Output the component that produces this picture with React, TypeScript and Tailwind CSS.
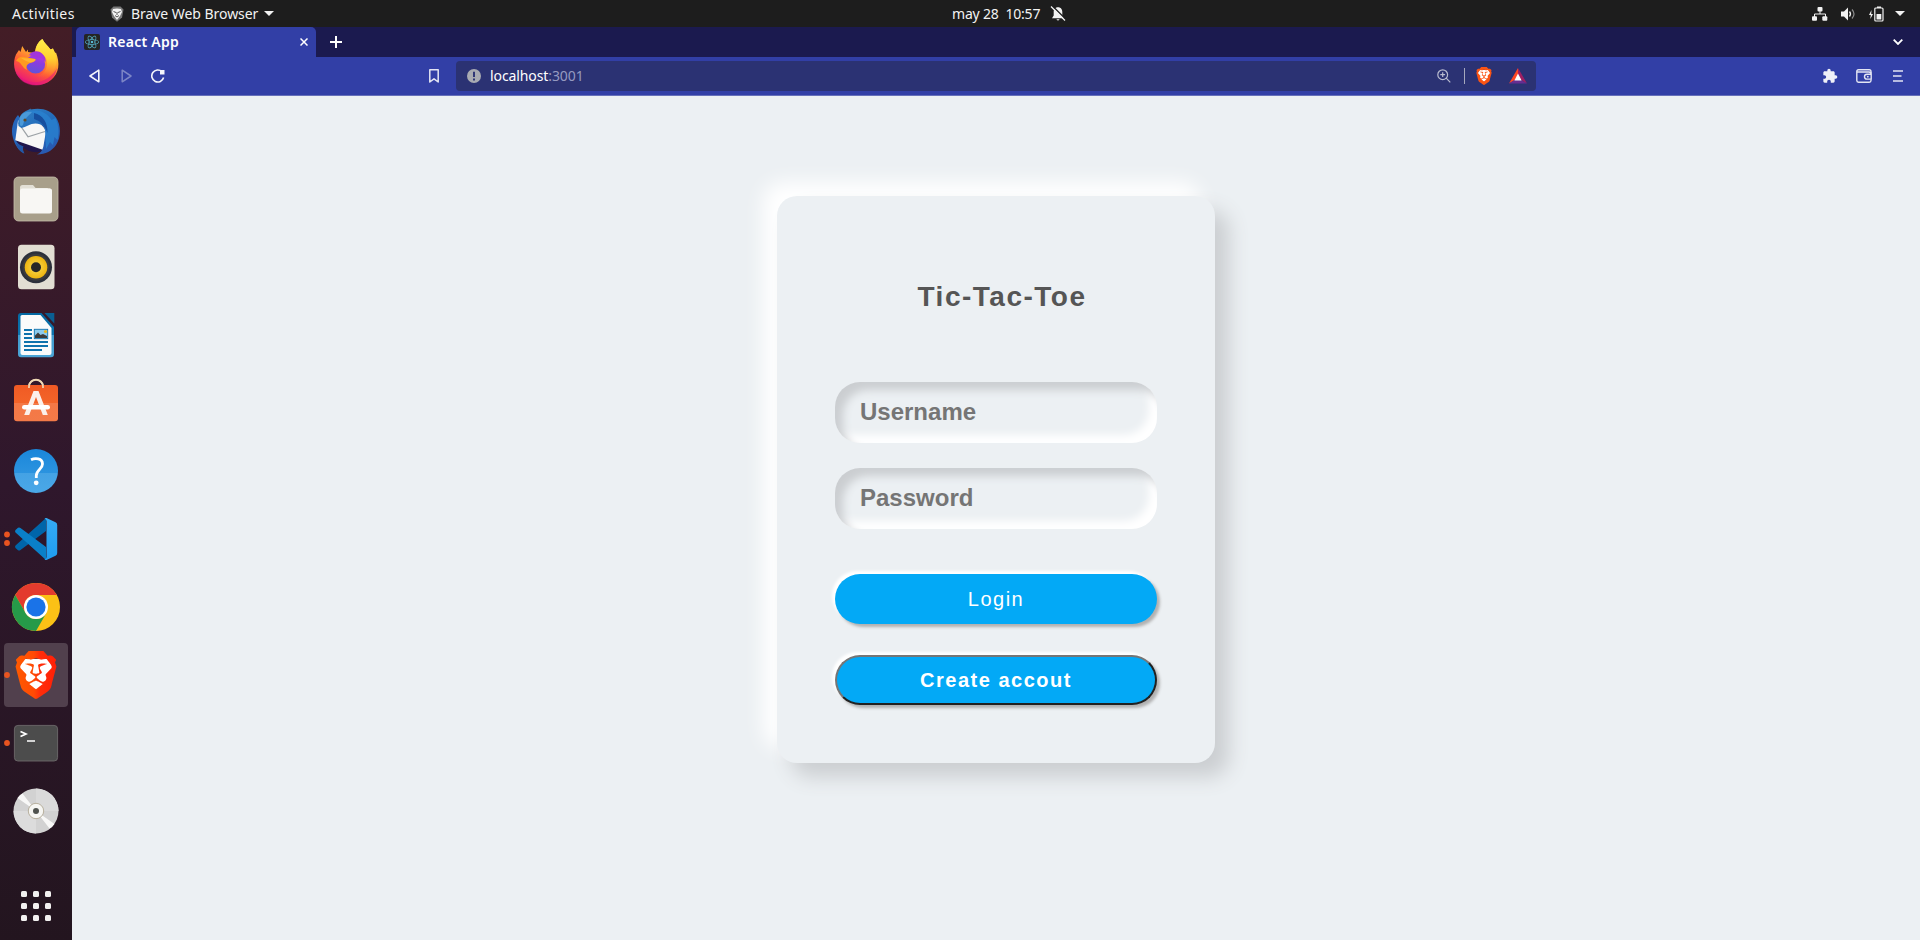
import React from "react";
import { SiBrave, SiReact } from "react-icons/si";
import { MdExtension } from "react-icons/md";

const Tile = ({ children, active = false, dots = [] as number[] }: { children?: React.ReactNode; active?: boolean; dots?: number[] }) => (
  <div className={active ? "h-16 w-16 shrink-0 rounded bg-[#51404d]" : "h-16 w-16 shrink-0"}>
    <svg viewBox="0 0 64 64" className="h-16 w-16 overflow-visible">
      {dots.map((y) => (
        <circle key={y} cx="3" cy={y} r="2.9" fill="#e95420" />
      ))}
      {children}
    </svg>
  </div>
);

const Gradients = () => (
  <defs>
    <linearGradient id="ffBody" x1="0.8" y1="0" x2="0.3" y2="1">
      <stop offset="0" stopColor="#fff44f" />
      <stop offset="0.35" stopColor="#ffb02e" />
      <stop offset="0.65" stopColor="#ff5a36" />
      <stop offset="1" stopColor="#e8117f" />
    </linearGradient>
    <linearGradient id="ffFlame" x1="0" y1="0" x2="0" y2="1">
      <stop offset="0" stopColor="#fff04a" />
      <stop offset="0.5" stopColor="#ffd130" />
      <stop offset="1" stopColor="#ff8a2a" stopOpacity="0" />
    </linearGradient>
    <linearGradient id="ffGlobe" x1="0.3" y1="1" x2="0.6" y2="0">
      <stop offset="0" stopColor="#5b55d8" />
      <stop offset="0.6" stopColor="#8a3de0" />
      <stop offset="1" stopColor="#b536e0" />
    </linearGradient>
    <linearGradient id="tbBody" x1="0.2" y1="0" x2="0.8" y2="1">
      <stop offset="0" stopColor="#2f7fc4" />
      <stop offset="0.5" stopColor="#2168b9" />
      <stop offset="1" stopColor="#2a56b0" />
    </linearGradient>
    <linearGradient id="help" x1="0" y1="0" x2="0" y2="1">
      <stop offset="0" stopColor="#1a86da" />
      <stop offset="0.54" stopColor="#2b93df" />
      <stop offset="0.55" stopColor="#44a2e4" />
      <stop offset="1" stopColor="#4aa8e8" />
    </linearGradient>
    <linearGradient id="bag" x1="0" y1="0" x2="0" y2="1">
      <stop offset="0" stopColor="#f05a24" />
      <stop offset="0.49" stopColor="#f36429" />
      <stop offset="0.5" stopColor="#f47846" />
      <stop offset="1" stopColor="#f37a48" />
    </linearGradient>
    <linearGradient id="writer" x1="0" y1="0" x2="0" y2="1">
      <stop offset="0" stopColor="#0369a3" />
      <stop offset="0.49" stopColor="#0e74ae" />
      <stop offset="0.5" stopColor="#3f9bcd" />
      <stop offset="1" stopColor="#4ba5d6" />
    </linearGradient>
    <linearGradient id="brave" x1="0" y1="0" x2="1" y2="0">
      <stop offset="0" stopColor="#ff5a00" />
      <stop offset="0.45" stopColor="#ff4a05" />
      <stop offset="0.6" stopColor="#ff2d0a" />
      <stop offset="1" stopColor="#ff1f06" />
    </linearGradient>
    <linearGradient id="code" x1="0" y1="0" x2="0" y2="1">
      <stop offset="0" stopColor="#35abf3" />
      <stop offset="1" stopColor="#1f9cf0" />
    </linearGradient>
    <radialGradient id="speaker">
      <stop offset="0" stopColor="#f9dc55" />
      <stop offset="1" stopColor="#edb40f" />
    </radialGradient>
  </defs>
);

const Dock = () => (
  <aside className="flex w-[72px] shrink-0 flex-col items-center gap-1 bg-linear-to-b from-[#431d26] via-[#2f172c] to-[#23151f] pt-1">
    <Tile>
      <Gradients />
      <path d="M38.3 8C41 13 44 15 46.500 18.500L49 17.500C49.200 20 50 20.500 51 22L52 21.500C56 32 55.500 42 47 49C39 56 25 55.500 17 48.500C9.500 42 8.500 31 12 23.500L15 19L16.500 21L18.200 15L22 21L24 18.500L24 21L31 22C31 16 34 11 38.300 8Z" fill="url(#ffBody)" />
      <path d="M38.300 8C41 13 44 15 46.500 18.500L49 17.500C54 26 54 37 46 44C41 48 36 47 33 45C42 43 45 34 42 27L38 23C34 20 31.500 20 31.500 20C32 15 34 11 38.300 8Z" fill="url(#ffFlame)" />
      <circle cx="31.600" cy="33" r="9.600" fill="url(#ffGlobe)" />
      <path d="M25 24C28 20 34 19 38 22.500C41 25 42 28 41.500 31C39 27 36 26 33 27Z" fill="#a235dc" />
      <path d="M12 30C14 26 17 25.500 20 26L31.500 28C32.500 30 29 31.500 26 32C22 34 22 36 23 39C18 37 18 31 12 30Z" fill="#ff9a1f" />
      <path d="M17 27L31 28C32 30 29 31 26 31.600C23 30.500 20 29 17 27Z" fill="#ffb52e" />
      <path d="M11.500 40C18 51 32 55 44 47C48 44 51 41 53 37C51 48 42 54.500 32 54.500C22 54.500 14 49 11.500 40Z" fill="#e0147f" opacity="0.55" />
    </Tile>
    <Tile>
      <path d="M14 16C9 22 6.500 30 9 39C11 46 14 51 20 54.500C18.500 51 19 49 19 47L30 40Z" fill="#2666bb" />
      <path d="M11.500 41L39.500 50.500L36 53C27 54 17 50 11.500 41Z" fill="#20164b" />
      <path d="M12 44C13 49 16 53 20.500 54.500C18.500 51 18.500 49 19.500 47.500Z" fill="#2357a6" />
      <path d="M14 21.500L11.300 41.300L39.300 51L43 32L34 22Z" fill="#f7f7f6" />
      <path d="M14.500 24L24 37.700L41 32.500" fill="none" stroke="#9da3a7" strokeWidth="1.200" />
      <path d="M14.500 27C13 19 18 13 24 11L27 9.500L26.500 10.500C37 8 47 11 52 18.500C57 26 57.500 38 52 46C47.500 52 42 55.500 33 55.500C36.500 54 38 52 39.300 48L41.500 35C41.500 28 38 24.500 31.500 24.500C26 24.500 22 28 17.500 29Z" fill="url(#tbBody)" />
      <path d="M26 12C34 10 43 13 47.500 21L51.500 19C54.500 26 55.500 33 53.500 41L50.500 38L49 46L46 43L42 50L41.300 35C42 27 37 18 26 12Z" fill="#2a83d2" opacity="0.75" />
      <path d="M30 14C39 16 44 24 43.500 34C41 27 37 22 30 20Z" fill="#164f9f" />
      <path d="M15.500 20C17 14 22 12 28 13C25 17 21 18 19 26Q17 28 16 26Z" fill="#4a99d8" />
      <circle cx="21" cy="21" r="1.600" fill="#5f4a29" />
    </Tile>
    <Tile>
      <rect x="10" y="10" width="44" height="44" rx="4.500" fill="#a89f8a" stroke="#c5beaa" strokeWidth="0.800" />
      <path d="M16 20.500Q16 18 18.500 18H29L32 21.500H46Q48 21.500 48 24V30H16Z" fill="#e3e0d6" />
      <rect x="16" y="21.500" width="32" height="25" rx="2.500" fill="#f8f7f4" />
      <path d="M16 25Q16 23.500 18 23.500H29L32 21.300H44L40 28H16Z" fill="#f8f7f4" />
    </Tile>
    <Tile>
      <rect x="14" y="9.800" width="36.500" height="44.400" rx="3.500" fill="#e2ded3" />
      <circle cx="32" cy="32.300" r="16" fill="#2c303b" />
      <circle cx="32" cy="32.300" r="13.500" fill="#3b3b3d" />
      <circle cx="32" cy="32.300" r="11.300" fill="url(#speaker)" />
      <circle cx="32" cy="32.300" r="5" fill="#262627" />
    </Tile>
    <Tile>
      <path d="M17 10H37.500L50 24V51Q50 54.300 47 54.300H17Q14 54.300 14 51V13Q14 10 17 10Z" fill="url(#writer)" />
      <path d="M18 12H36.500L47.500 25V50Q47.500 52 45.500 52H18.500Q16.500 52 16.500 50V13.500Q16.500 12 18 12Z" fill="#fafbfb" />
      <path d="M40.500 10H50.300V20.500Z" fill="#0a5e92" />
      <path d="M20 27H28M20 31H28M20 35H28M20 39H44M20 43H44M20 47H38" stroke="#0f73ad" strokeWidth="1.800" />
      <rect x="30.300" y="26.300" width="13.400" height="9.400" fill="#8ccbed" stroke="#0f73ad" strokeWidth="0.900" />
      <path d="M31 35V32.500L34 29.500L36.500 32L39 31L43 33V35Z" fill="#3c3c3c" />
      <circle cx="41.500" cy="28.500" r="1.600" fill="#e9b51c" />
    </Tile>
    <Tile>
      <path d="M25 17V15.500A7 7 0 0 1 39 15.500V17" fill="none" stroke="#f0d9b5" strokeWidth="1.700" />
      <rect x="10" y="14" width="44" height="36.300" rx="3" fill="url(#bag)" />
      <path d="M25 17V15A7 6 0 0 1 39 15V17" fill="none" stroke="#f0d9b5" strokeWidth="1.700" />
      <path d="M29.500 20H34.500L43.800 44H38.800L32 26L25.200 44H20.200Z" fill="#fbf0ea" />
      <rect x="18" y="34" width="28" height="4.600" rx="2.300" fill="#ffffff" />
    </Tile>
    <Tile>
      <circle cx="32" cy="32" r="22" fill="url(#help)" />
      <path d="M27 20.800C31 18.800 38.500 19 38.500 25C38.500 30 32.300 30.500 32.300 36.800V39" fill="none" stroke="#ffffff" strokeWidth="2.800" />
      <circle cx="32.200" cy="43.800" r="2.400" fill="#ffffff" />
    </Tile>
    <Tile dots={[27.500, 36]}>
      <path d="M42 11L11.500 38.500Q10.500 39.700 11.500 41L14 43.200Q15.300 44 16.500 43L42 24Z" fill="#0065a9" />
      <path d="M42 53L11.500 25.500Q10.500 24.300 11.500 23L14 20.800Q15.300 20 16.500 21L42 40Z" fill="#0a80c8" />
      <path d="M42.500 11L51.500 15.200Q53.200 16 53.200 18V46Q53.200 48 51.500 48.800L42.500 53Q41.500 53.300 40.500 52.500Q42.500 52 42.500 50V14Q42.500 12 40.500 11.500Q41.500 10.700 42.500 11Z" fill="url(#code)" />
    </Tile>
    <Tile>
      <circle cx="32" cy="32" r="24" fill="#fbc116" />
      <path d="M11.200 20A24 24 0 0 1 52.800 20H32A12 12 0 0 0 21.600 38Z" fill="#e33b2e" />
      <path d="M11.200 20A24 24 0 0 0 32 56L42.400 38A12 12 0 0 1 21.600 38Z" fill="#269a49" />
      <circle cx="32" cy="32" r="12" fill="#ffffff" />
      <circle cx="32" cy="32" r="9.600" fill="#1a73e8" />
    </Tile>
    <Tile active dots={[32]}>
      <path d="M20 16L44 16L49 24L43 44L32 52L21 44L15 24Z" fill="#ffffff" />
      <SiBrave x="8" y="8" width="48" height="48" size={48} fill="url(#brave)" />
    </Tile>
    <Tile dots={[32]}>
      <rect x="10.400" y="14.400" width="43.200" height="35.600" rx="3.500" fill="#4c4c4c" stroke="#6d6a6b" strokeWidth="0.900" />
      <path d="M16.500 20.500L22 23L16.500 25.500" fill="none" stroke="#ffffff" strokeWidth="1.700" />
      <path d="M23 30H31" stroke="#ffffff" strokeWidth="1.500" />
    </Tile>
    <Tile>
      <circle cx="32" cy="32" r="22.500" fill="#d2d2d2" />
      <path d="M32 32L32 9.500A22.500 22.500 0 0 1 54.500 32Z" fill="#dadada" />
      <path d="M32 32L32 54.500A22.500 22.500 0 0 1 9.500 32Z" fill="#dcdcdc" />
      <path d="M32 32L13.500 19Q15.500 16 18.500 14.500ZM32 32L50.500 45Q48.500 48 45.500 49.500Z" fill="#f8f8f7" />
      <circle cx="32" cy="32" r="7.700" fill="#f6f6f3" stroke="#b1a894" strokeWidth="0.900" />
      <circle cx="32" cy="32" r="3" fill="#50534f" />
    </Tile>
    <div className="mt-11 grid grid-cols-3 gap-1.5">
      {Array.from({ length: 9 }, (_, i) => (
        <span key={i} className="h-1.5 w-1.5 rounded-[1.5px] bg-[#f2f1f0]" />
      ))}
    </div>
  </aside>
);

const TopBar = () => (
  <header className="flex h-[27px] shrink-0 items-center bg-[#1d1d1d] text-[14px] text-[#f2f2f2]">
    <div className="flex w-[952px] items-center pl-3">
      <span className="w-[98px] tracking-[0.45px]">Activities</span>
      <svg viewBox="0 0 14 16" className="h-4 w-3.5">
        <path d="M3.500 0.500H10.500L13.500 3.500L12 11.500L7 15.700L2 11.500L0.500 3.500Z" fill="#777777" />
        <path d="M3 3L7 2.500L11 3L12 6L10 10L7 14L4 10L2 6Z" fill="#f4f4f4" />
        <path d="M3.500 5.500L6 6.500M10.500 5.500L8 6.500M7 6V9M5 9.500L7 11L9 9.500" stroke="#555555" fill="none" />
      </svg>
      <span className="ml-[7px] tracking-[-0.05px]">Brave Web Browser</span>
      <svg viewBox="0 0 10 5" className="ml-[6px] h-[5px] w-2.5"><path d="M0 0H10L5 5Z" fill="#f2f2f2" /></svg>
    </div>
    <span className="w-[98px] whitespace-pre tracking-[-0.2px]">may 28  10:57</span>
    <svg viewBox="0 0 16 16" className="h-4 w-4">
      <path d="M8 1.200C11 1.200 12.300 3.500 12.300 6V9.500L14 12.300H2L3.700 9.500V6C3.700 3.500 5 1.200 8 1.200ZM6.300 13.200H9.700L8 14.800Z" fill="#f2f2f2" />
      <path d="M2 -0.500L16 13.500" stroke="#1d1d1d" strokeWidth="1.400" />
      <path d="M1 0.500L15 14.500" stroke="#f2f2f2" strokeWidth="1.300" />
    </svg>
    <div className="ml-auto flex items-center pr-[15px]">
      <svg viewBox="0 0 16 14" className="h-3.5 w-4">
        <path d="M8 4V7M2.500 10V7H13.500V10" fill="none" stroke="#f2f2f2" />
        <rect x="5.500" y="0" width="5" height="4.400" rx="1" fill="#f2f2f2" />
        <rect x="0" y="9.300" width="5" height="4.400" rx="1" fill="#f2f2f2" />
        <rect x="10.300" y="9.300" width="5" height="4.400" rx="1" fill="#f2f2f2" />
      </svg>
      <svg viewBox="0 0 15 14" className="ml-[13px] h-3.5 w-[15px]">
        <path d="M0 4.500H3L7 0.500V13.500L3 9.500H0Z" fill="#f2f2f2" />
        <path d="M8.500 4.500Q10.500 7 8.500 9.500" fill="none" stroke="#f2f2f2" strokeWidth="1.300" />
        <path d="M11 2.500Q15 7 11 11.500" fill="none" stroke="#8a8a8a" strokeWidth="1.200" />
      </svg>
      <svg viewBox="0 0 15 16" className="ml-[13px] h-4 w-[15px]">
        <path d="M2.500 4L0 9H1.800L1.300 13L4 8H2.200Z" fill="#f2f2f2" />
        <rect x="5.800" y="2" width="8.200" height="13" rx="1" fill="none" stroke="#f2f2f2" strokeWidth="1.200" />
        <rect x="8" y="0.500" width="4" height="1.500" fill="#f2f2f2" />
        <rect x="7.500" y="8" width="4.800" height="5.500" fill="#f2f2f2" />
      </svg>
      <svg viewBox="0 0 10 5" className="ml-[11px] h-[5px] w-2.5"><path d="M0 0H10L5 5Z" fill="#f2f2f2" /></svg>
    </div>
  </header>
);

const TabStrip = () => (
  <div className="flex h-[30px] shrink-0 items-center bg-[#1b1a4f] pl-1">
    <div className="flex h-full w-60 items-center rounded-t-[5px] bg-[#323fa6] pl-2">
      <span className="flex h-4 w-4 items-center justify-center rounded-[2px] bg-[#242424]">
        <SiReact className="h-3.5 w-3.5 text-[#58b6cf]" />
      </span>
      <span className="ml-2 pb-0.5 text-[14px] font-semibold tracking-[0.25px] text-white">React App</span>
      <svg viewBox="0 0 8 8" className="mr-2 ml-auto h-2 w-2"><path d="M0.500 0.500L7.500 7.500M7.500 0.500L0.500 7.500" stroke="#ffffff" strokeWidth="1.500" /></svg>
    </div>
    <svg viewBox="0 0 12 12" className="ml-3.5 h-3 w-3"><path d="M6 0V12M0 6H12" stroke="#ffffff" strokeWidth="2" /></svg>
    <svg viewBox="0 0 10 6" className="mr-[17px] ml-auto h-1.5 w-[10px]"><path d="M0.700 0.700L5 5L9.300 0.700" fill="none" stroke="#ffffff" strokeWidth="1.800" /></svg>
  </div>
);

const Toolbar = () => (
  <div className="flex h-[39px] shrink-0 items-center border-b border-[#6670ba] bg-[#323fa6]">
    <svg viewBox="0 0 11 14" className="ml-[17px] h-3.5 w-[11px]"><path d="M9.800 1.200V12.800L1 7Z" fill="none" stroke="#f4f5fb" strokeWidth="1.600" strokeLinejoin="round" /></svg>
    <svg viewBox="0 0 11 14" className="ml-[21px] h-3.5 w-[11px]"><path d="M1.200 1.200V12.800L10 7Z" fill="none" stroke="#7d86c6" strokeWidth="1.500" strokeLinejoin="round" /></svg>
    <svg viewBox="0 0 14 14" className="ml-[19px] h-3.5 w-3.5">
      <path d="M12.600 8.500A6 6 0 1 1 11 2.700" fill="none" stroke="#f4f5fb" strokeWidth="1.600" />
      <path d="M9 1H13.500V5.500H9Z" fill="#f4f5fb" />
    </svg>
    <svg viewBox="0 0 10 14" className="ml-[264px] h-3.5 w-2.5"><path d="M0.800 0.800H9.200V13L5 9.800L0.800 13Z" fill="none" stroke="#e3e5f3" strokeWidth="1.500" strokeLinejoin="round" /></svg>
    <div className="ml-[17px] flex h-[30px] w-[1080px] items-center rounded bg-[#2b3273] pl-[11px]">
      <svg viewBox="0 0 14 14" className="h-3.5 w-3.5">
        <circle cx="7" cy="7" r="7" fill="#a9abb2" />
        <path d="M7 2.800V8M7 9.500V11.500" stroke="#2b3273" strokeWidth="1.900" />
      </svg>
      <span className="ml-[9px] pb-px text-[14px] tracking-[-0.1px] text-white">localhost<span className="text-[#959ac0]">:3001</span></span>
      <svg viewBox="0 0 14 14" className="mr-[13px] ml-auto h-3.5 w-3.5">
        <circle cx="5.700" cy="5.700" r="4.900" fill="none" stroke="#b9bcd0" strokeWidth="1.200" />
        <path d="M9.200 9.200L13.300 13.300M5.700 3.300V8.100M3.300 5.700H8.100" stroke="#b9bcd0" strokeWidth="1.200" />
      </svg>
      <span className="h-4 w-px bg-[#a5a8bd]" />
      <span className="ml-2.5 flex h-[18px] w-[18px] items-center justify-center">
        <svg viewBox="0 0 64 64" className="h-6 w-6 shrink-0">
          <path d="M20 16L44 16L49 24L43 44L32 52L21 44L15 24Z" fill="#ffffff" />
          <SiBrave x="8" y="8" width="48" height="48" size={48} fill="#fb5414" />
        </svg>
      </span>
      <svg viewBox="0 0 18 16" className="mr-[9px] ml-4 h-4 w-[18px]">
        <path d="M9 0L0 15.500L9 10Z" fill="#ff4724" />
        <path d="M9 0L18 15.500L9 10Z" fill="#9e1f63" />
        <path d="M0 15.500H18L9 10Z" fill="#662d91" />
        <path d="M9 5.500L12.600 12.500H5.400Z" fill="#ffffff" />
      </svg>
    </div>
    <MdExtension className="ml-auto h-4 w-4 text-[#eff0f8]" />
    <svg viewBox="0 0 16 14" className="ml-[18px] h-3.5 w-4">
      <path d="M15 4.500V2.500Q15 0.800 13.300 0.800H2.500Q0.800 0.800 0.800 2.500V11.500Q0.800 13.200 2.500 13.200H13.300Q15 13.200 15 11.500V10.500" fill="none" stroke="#e3e5f3" strokeWidth="1.400" />
      <path d="M1 3H13Q15.200 3 15.200 5.300H11Q8.500 5.300 8.500 7.700T11 10.100H15.200V5" fill="none" stroke="#e3e5f3" strokeWidth="1.400" />
      <circle cx="11.800" cy="7.700" r="0.900" fill="#e3e5f3" />
    </svg>
    <svg viewBox="0 0 10 12" className="mr-[17px] ml-[21px] h-3 w-2.5"><path d="M0 1H10M0 6H8.500M0 11H10" stroke="#e3e5f3" strokeWidth="1.500" /></svg>
  </div>
);

const fieldClass =
  "h-[61px] w-full rounded-[25px] bg-[#ecf0f3] pl-[25px] pb-px text-[24px] font-bold text-[#555555] shadow-[inset_8px_8px_8px_#cbced1,inset_-8px_-8px_8px_#ffffff] outline-none placeholder:text-[#757575]";

const LoginCard = () => (
  <section className="flex h-[567px] w-[438px] flex-col rounded-[20px] bg-[#ecf0f3] px-[58px] pt-[81px] font-['Liberation_Sans',Arial,sans-serif] shadow-[14px_14px_20px_#cbced1,-14px_-14px_20px_#ffffff]">
    <h1 className="pl-3 text-center text-[28px] leading-[40px] font-bold tracking-[1.5px] text-[#555555]">Tic-Tac-Toe</h1>
    <input className={`${fieldClass} mt-[65px]`} placeholder="Username" />
    <input className={`${fieldClass} mt-[25px]`} type="password" placeholder="Password" />
    <button className="mt-[45px] h-[50px] w-full shrink-0 rounded-[25px] bg-[#03a9f6] text-[20px] tracking-[1.5px] text-white shadow-[3px_3px_3px_#b1b1b1,-3px_-3px_3px_#ffffff]">Login</button>
    <button className="mt-[31px] h-[50px] w-full shrink-0 rounded-[25px] border-2 border-t-[#767676] border-r-[#212121] border-b-[#212121] border-l-[#767676] bg-[#03a9f6] text-[20px] font-bold tracking-[1.5px] text-white shadow-[3px_3px_3px_#b1b1b1,-3px_-3px_3px_#ffffff]">Create accout</button>
  </section>
);

export default function App() {
  return (
    <div className="flex h-[940px] w-[1920px] flex-col overflow-hidden font-['Noto_Sans',sans-serif]">
      <TopBar />
      <div className="flex min-h-0 flex-1">
        <Dock />
        <div className="flex min-w-0 flex-1 flex-col">
          <TabStrip />
          <Toolbar />
          <main className="flex flex-1 justify-center bg-[#ecf0f3] pt-[100px]">
            <LoginCard />
          </main>
        </div>
      </div>
    </div>
  );
}
